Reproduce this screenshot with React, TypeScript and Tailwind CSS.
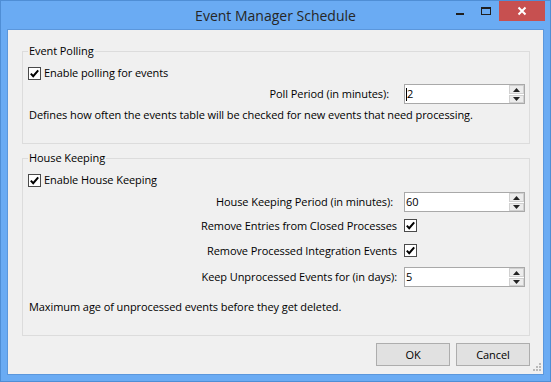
import React from "react";

function Check() {
  return (
    <span className="flex h-[13px] w-[13px] shrink-0 items-center justify-center border border-[#4a4a4a] bg-white">
      <svg width="11" height="11" viewBox="0 0 11 11">
        <path d="M1.8 5.6 L4.2 8.2 L9.2 2.4" fill="none" stroke="#000" strokeWidth="2" />
      </svg>
    </span>
  );
}

function Arrow({ up }: { up?: boolean }) {
  return (
    <svg width="7" height="4" viewBox="0 0 7 4">
      {up ? <path d="M0 4 L3.5 0 L7 4 Z" fill="#222" /> : <path d="M0 0 L3.5 4 L7 0 Z" fill="#222" />}
    </svg>
  );
}

function Spin({ value, caret }: { value: string; caret?: boolean }) {
  return (
    <div className="flex h-[20px] w-[121px] shrink-0 border border-[#a9a9a9] bg-white">
      <div className="flex flex-1 items-center pl-[1px] text-[11px] leading-[16px] text-black">
        {caret && <span className="h-[13px] w-px bg-black" />}
        <span>{value}</span>
      </div>
      <div className="flex w-[15px] flex-col gap-px">
        <div className="flex h-[9px] items-center justify-center border border-[#d0d0d0] bg-[#ececec]">
          <Arrow up />
        </div>
        <div className="flex h-[8px] items-center justify-center border border-[#d0d0d0] bg-[#ececec]">
          <Arrow />
        </div>
      </div>
    </div>
  );
}

function Group({ title, children }: { title: string; children: React.ReactNode }) {
  return (
    <div className="relative flex flex-col border border-[#dcdcdc] pt-[15px] pb-[20px] pr-[4px]">
      <span className="absolute -top-[9px] left-[5px] bg-[#f0f0f0] px-[1px] leading-[16px]">{title}</span>
      {children}
    </div>
  );
}

function CheckRow({ label }: { label: string }) {
  return (
    <div className="flex h-[13px] items-center gap-[3px] pl-[5px]">
      <Check />
      <span className="-mt-px leading-[16px]">{label}</span>
    </div>
  );
}

function FieldRow({ label, gap, className, children }: { label: string; gap: string; className: string; children: React.ReactNode }) {
  return (
    <div className={`flex items-center justify-end ${className}`}>
      <span className={`leading-[16px] ${gap}`}>{label}</span>
      {children}
    </div>
  );
}

export default function App() {
  return (
    <div className="flex h-[382px] w-[551px] flex-col border border-[#4f8ed5] bg-[#6aabf3] font-['Open_Sans','Noto_Sans',sans-serif] text-[11px] tracking-[-0.08px] text-black">
      {/* title bar */}
      <div className="grid h-[28px] shrink-0 grid-cols-[1fr_auto_1fr]">
        <div />
        <div className="pt-[2px] text-[14px] leading-[26px] tracking-normal text-[#262626]">Event Manager Schedule</div>
        <div className="flex items-start justify-end pr-[5px]">
          <div className="flex h-[20px] w-[26px] items-center justify-center">
            <svg width="26" height="20" viewBox="0 0 26 20">
              <rect x="9" y="12" width="8" height="2" fill="#1f1f1f" />
            </svg>
          </div>
          <div className="flex h-[20px] w-[26px] items-center justify-center">
            <svg width="26" height="20" viewBox="0 0 26 20">
              <rect x="8.5" y="6.5" width="9" height="7" fill="none" stroke="#1f1f1f" strokeWidth="1" />
              <rect x="8" y="6" width="10" height="2" fill="#1f1f1f" />
            </svg>
          </div>
          <div className="flex h-[20px] w-[46px] items-center justify-center bg-[#c75050]">
            <svg width="10" height="10" viewBox="0 0 10 10">
              <path d="M1.5 1.5 L8.5 8.5 M8.5 1.5 L1.5 8.5" stroke="#fff" strokeWidth="2" />
            </svg>
          </div>
        </div>
      </div>

      {/* client */}
      <div className="mx-[6px] mb-[6px] flex-1 border border-[#5b97dc]">
        <div className="relative flex h-full flex-col bg-[#f0f0f0] pl-[14px] pr-[13px] pt-[21px]">
          <Group title="Event Polling">
            <CheckRow label="Enable polling for events" />
            <FieldRow label="Poll Period (in minutes):" gap="mr-[15px]" className="mt-[4px] h-[20px]">
              <Spin value="2" caret />
            </FieldRow>
            <p className="mt-[3px] pl-[6px] leading-[16px]">
              Defines how often the events table will be checked for new events that need processing.
            </p>
          </Group>

          <div className="mt-[14px]">
            <Group title="House Keeping">
              <CheckRow label="Enable House Keeping" />
              <FieldRow label="House Keeping Period (in minutes):" gap="mr-[11px]" className="mt-[5px] h-[20px]">
                <Spin value="60" />
              </FieldRow>
              <FieldRow label="Remove Entries from Closed Processes" gap="mr-[7px]" className="mt-[7px] h-[13px]">
                <div className="w-[121px]">
                  <Check />
                </div>
              </FieldRow>
              <FieldRow label="Remove Processed Integration Events" gap="mr-[7px]" className="mt-[12px] h-[13px]">
                <div className="w-[121px]">
                  <Check />
                </div>
              </FieldRow>
              <FieldRow label="Keep Unprocessed Events for (in days):" gap="mr-[7px]" className="mt-[10px] h-[20px]">
                <Spin value="5" />
              </FieldRow>
              <p className="mt-[12px] pl-[6px] leading-[16px]">Maximum age of unprocessed events before they get deleted.</p>
            </Group>
          </div>

          <div className="mt-[7px] flex justify-end gap-[6px]">
            <button className="h-[23px] w-[74px] border border-[#adadad] bg-[#e1e1e1] leading-[16px]">OK</button>
            <button className="h-[23px] w-[74px] border border-[#adadad] bg-[#e1e1e1] leading-[16px]">Cancel</button>
          </div>

          <svg className="absolute bottom-[2px] right-[1px]" width="10" height="10" viewBox="0 0 10 10">
            <g fill="#b9b9b9">
              <rect x="7" y="1" width="2" height="2" />
              <rect x="4" y="4" width="2" height="2" />
              <rect x="7" y="4" width="2" height="2" />
              <rect x="1" y="7" width="2" height="2" />
              <rect x="4" y="7" width="2" height="2" />
              <rect x="7" y="7" width="2" height="2" />
            </g>
          </svg>
        </div>
      </div>
    </div>
  );
}
